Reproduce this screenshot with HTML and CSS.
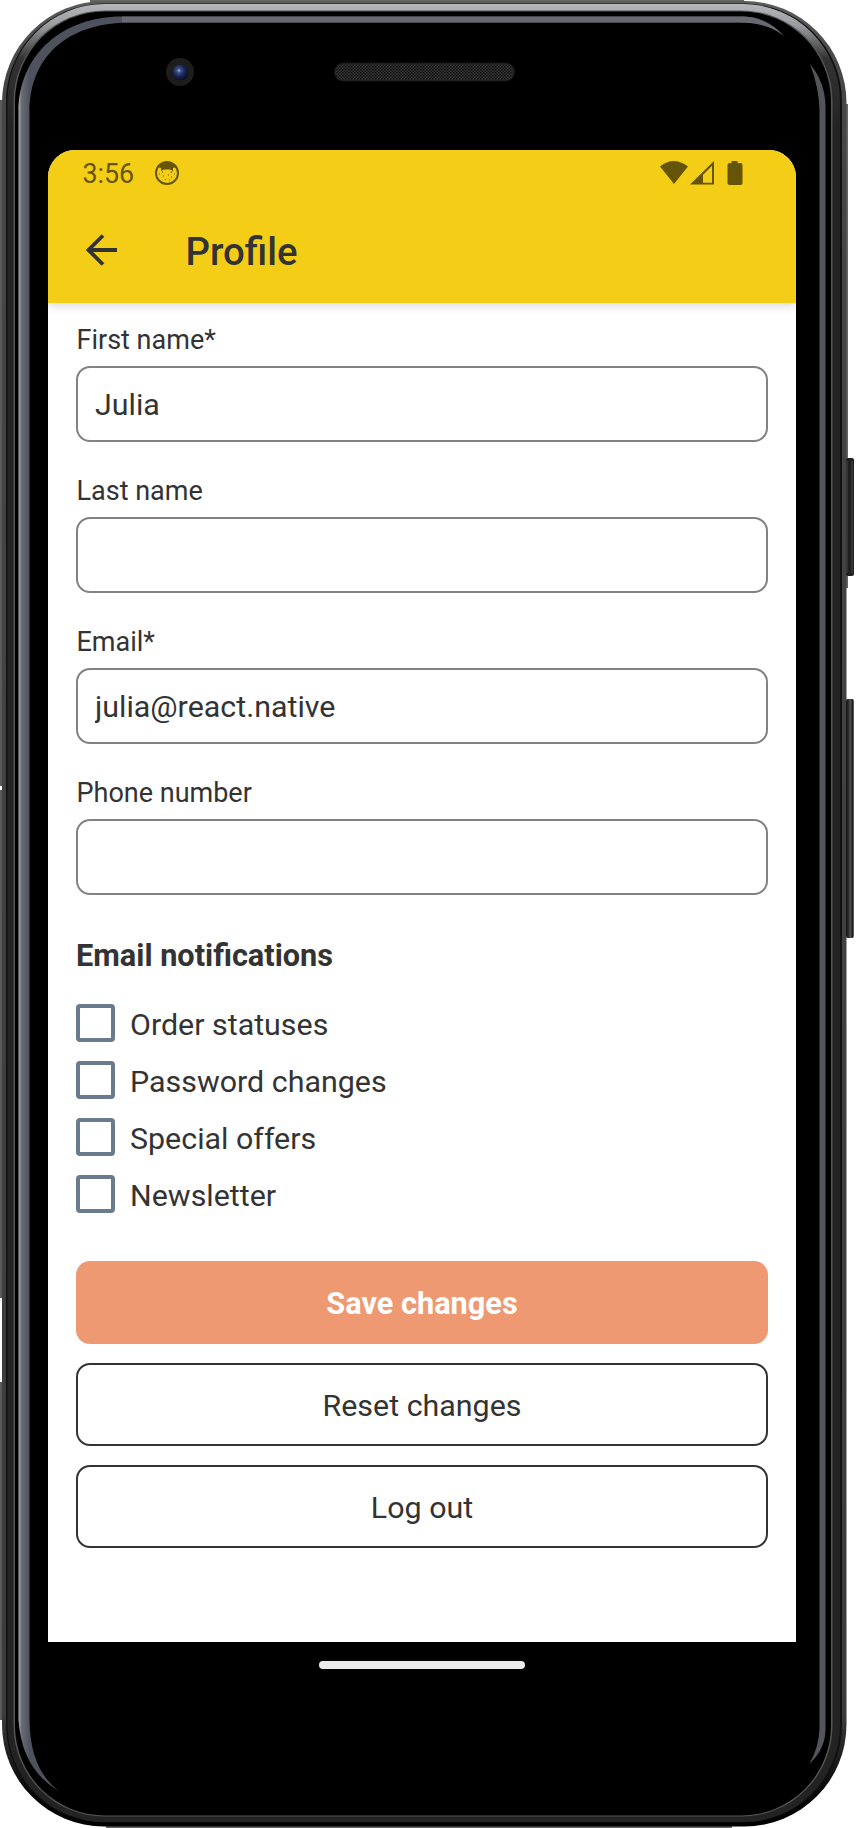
FILE: index.html
```html
<!DOCTYPE html>
<html lang="en">
<head>
<meta charset="utf-8">
<title>Profile</title>
<link rel="stylesheet" href="styles.css">
</head>
<body>
<div class="device">
  <svg class="frame" width="859" height="1828" viewBox="0 0 859 1828" aria-hidden="true">
    <defs>
      <linearGradient id="shell" x1="0" y1="0" x2="0" y2="1">
        <stop offset="0" stop-color="#5c5c5c"/><stop offset=".04" stop-color="#474546"/><stop offset=".94" stop-color="#3c3a3b"/><stop offset=".98" stop-color="#080808"/><stop offset="1" stop-color="#000"/>
      </linearGradient>
      <linearGradient id="rim" x1="0" y1="0" x2="0" y2="1">
        <stop offset="0" stop-color="#b4b6ba"/><stop offset=".012" stop-color="#9a9ca0"/><stop offset=".03" stop-color="#333"/><stop offset=".07" stop-color="#232323"/><stop offset="1" stop-color="#232323"/>
      </linearGradient>
      <linearGradient id="glow" gradientUnits="userSpaceOnUse" x1="18" y1="0" x2="30" y2="0">
        <stop offset="0" stop-color="#aeb0b2"/><stop offset=".2" stop-color="#85888c"/><stop offset=".3" stop-color="#686c73"/><stop offset="1" stop-color="#4d525d"/>
      </linearGradient>
      <linearGradient id="key" x1="0" y1="0" x2="1" y2="0">
        <stop offset="0" stop-color="#111"/><stop offset=".3" stop-color="#2c2c2c"/><stop offset=".6" stop-color="#555"/><stop offset=".8" stop-color="#151515"/><stop offset="1" stop-color="#777"/>
      </linearGradient>
      <radialGradient id="lens" cx=".4" cy=".38" r=".6">
        <stop offset="0" stop-color="#a0b0d0"/><stop offset=".22" stop-color="#3e5088"/><stop offset=".6" stop-color="#1a2654"/><stop offset="1" stop-color="#0a1024"/>
      </radialGradient>
      <pattern id="mesh" width="3" height="3" patternUnits="userSpaceOnUse">
        <rect width="3" height="3" fill="#303231"/><rect width="1.5" height="1.5" fill="#111"/><rect x="1.5" y="1.5" width="1.5" height="1.5" fill="#191919"/>
      </pattern>
    </defs>
    <path d="M0 100h3V786H0zM0 790h3V1298H0zM0 1382h3V1720H0z" fill="#5a5a5a"/>
    <path d="M845 104h3V588h-3z" fill="#666"/>
    <path d="M106 1825H732V1828H106zM90 0H744V3H90z" fill="#666"/>
    <rect x="2" y="1" width="844.5" height="1825.5" rx="102" fill="url(#shell)"/>
    <rect x="6" y="3.5" width="836" height="1819" rx="98" fill="#111"/>
    <rect x="7.5" y="4" width="832.5" height="1818" rx="97" fill="url(#rim)"/>
    <rect x="13.5" y="10.5" width="819" height="1806" rx="91" fill="#555"/>
    <rect x="15" y="11.5" width="816" height="1804" rx="90" fill="#000"/>
    <path d="M18.5 1720V112C18.5 55 62 16.500 122 16.500H744Q766 17 784 36Q768 22.500 740 22.500H130C66 22.500 29.500 58 29.500 112V1720Q30 1770 59 1791Q22 1770 18.500 1720z" fill="url(#glow)"/>
    <path d="M122 16.500H744Q766 17 784 36Q768 22.500 740 22.500H122z" fill="#696a71"/>
    <path d="M810 64Q825 82 825.500 106V1730Q825 1750 809 1764Q819 1748 819.500 1728V110Q819 88 810 64z" fill="#54545b"/>
    <rect x="846" y="458" width="8" height="118" rx="2" fill="#202020"/>
    <path d="M847 461v112M852 461v112" stroke="#484848"/>
    <rect x="846" y="699" width="8" height="239" rx="2" fill="url(#key)"/>
    <circle cx="180" cy="72" r="14" fill="#1d1d1d"/><circle cx="180.500" cy="72.500" r="8" fill="url(#lens)"/>
    <rect x="334.500" y="63" width="180" height="18" rx="9" fill="url(#mesh)" stroke="#191919"/>
  </svg>

  <main class="screen">
    <header class="header">
      <div class="status">
        <div class="status-left">
          <span>3:56</span>
          <svg width="24" height="24" viewBox="0 0 24 24"><circle cx="12" cy="12" r="11" fill="none" stroke="#665508" stroke-width="2"/><path d="M2.500 6Q12-3 21.500 6L18 7V10L15 8.500H9L6 10V7z" fill="#665508"/><path d="M7 11h1M15.500 11h2M4 13h1M19 13h1M8 15h1M13 14h1M16 16h1M10 18.500h1M14 19h1" stroke="#665508"/></svg>
        </div>
        <div class="status-right">
          <svg width="85" height="26" viewBox="0 0 85 26" fill="#665508"><path d="M1 6.500Q14.500-4.500 29 6.500L15 24z"/><path fill-rule="evenodd" d="M31 24.500L55 1V24.500zM44 15V22.700H53V5.800z"/><path d="M72.500 1h6v2h3q2 0 2 2V23q0 2-2 2H70.500q-2 0-2-2V5q0-2 2-2h2z"/></svg>
        </div>
      </div>
      <div class="title-bar">
        <svg width="32" height="32" viewBox="0 0 32 32" fill="none" stroke="#333" stroke-width="3.8"><path d="M31 16H3M17 1.500L2.500 16L17 30.500"/></svg>
        <h1>Profile</h1>
      </div>
    </header>

    <form class="form">
      <label class="field"><span>First name*</span><input type="text" value="Julia"></label>
      <label class="field"><span>Last name</span><input type="text"></label>
      <label class="field"><span>Email*</span><input type="text" value="julia@react.native"></label>
      <label class="field"><span>Phone number</span><input type="text"></label>
      <h2>Email notifications</h2>
      <div class="checks">
        <label class="check"><i></i><span>Order statuses</span></label>
        <label class="check"><i></i><span>Password changes</span></label>
        <label class="check"><i></i><span>Special offers</span></label>
        <label class="check"><i></i><span>Newsletter</span></label>
      </div>
      <div class="actions">
        <button type="button" class="primary">Save changes</button>
        <button type="button">Reset changes</button>
        <button type="button">Log out</button>
      </div>
    </form>
  </main>
  <div class="home"></div>
</div>
</body>
</html>
```

FILE: styles.css
```css
* { box-sizing: border-box; }
body { margin: 0; background: #fff; color: #333; font-family: Roboto, sans-serif; }
.device { position: relative; width: 859px; height: 1828px; padding: 150px 63px 0 48px; overflow: hidden; }
.frame { position: absolute; left: 0; top: 0; }
.screen { position: relative; height: 1492px; background: #fff; border-radius: 27px 27px 0 0; overflow: hidden; }
.header { height: 152.5px; background: #f4ce16; box-shadow: 0 2px 10px rgba(0,0,0,.18); }
.status { display: flex; justify-content: space-between; align-items: center; height: 48px; padding: 0 52px 0 34.5px; color: #665508; font-size: 26.8px; }
.status-left { display: flex; align-items: center; gap: 21px; }
.status svg { display: block; margin-top: -2px; }
.title-bar { display: flex; align-items: center; gap: 67.5px; height: 104px; padding: 2px 0 0 38px; }
.title-bar svg { display: block; margin-top: -3px; }
h1 { margin: 0; font-size: 38.4px; font-weight: 500; line-height: 45px; }
.form { padding: 21px 28px 0; }
.field { display: block; height: 151px; font-size: 27px; line-height: 32px; }
.field span { display: block; height: 42.5px; padding-left: .5px; }
input { display: block; width: 100%; height: 76px; padding: 0 17px; border: 2px solid #828282; border-radius: 14px; background: #fff; color: #333; font: 30.4px Roboto, sans-serif; }
h2 { margin: 10px 0 0; font-size: 30.7px; font-weight: 700; line-height: 36px; }
.checks { display: grid; grid-auto-rows: 57.1px; margin-top: 30px; }
.check { display: flex; align-items: flex-start; gap: 15.5px; font-size: 30.4px; line-height: 42px; }
.check i { width: 38.5px; height: 38.5px; border: 4px solid #6a7b8c; border-radius: 4px; }
.actions { display: grid; gap: 18.8px; margin-top: 29px; }
button { height: 83.3px; padding: 2px 0 0; border: 2px solid #333; border-radius: 14px; background: #fff; color: #333; font: 30.4px Roboto, sans-serif; }
.primary { border: 0; background: #ee9972; color: #fff; font-size: 30.7px; font-weight: 700; }
.home { position: relative; width: 206px; height: 8px; margin: 19px 0 0 271px; border-radius: 4px; background: #eaeaea; }
```
